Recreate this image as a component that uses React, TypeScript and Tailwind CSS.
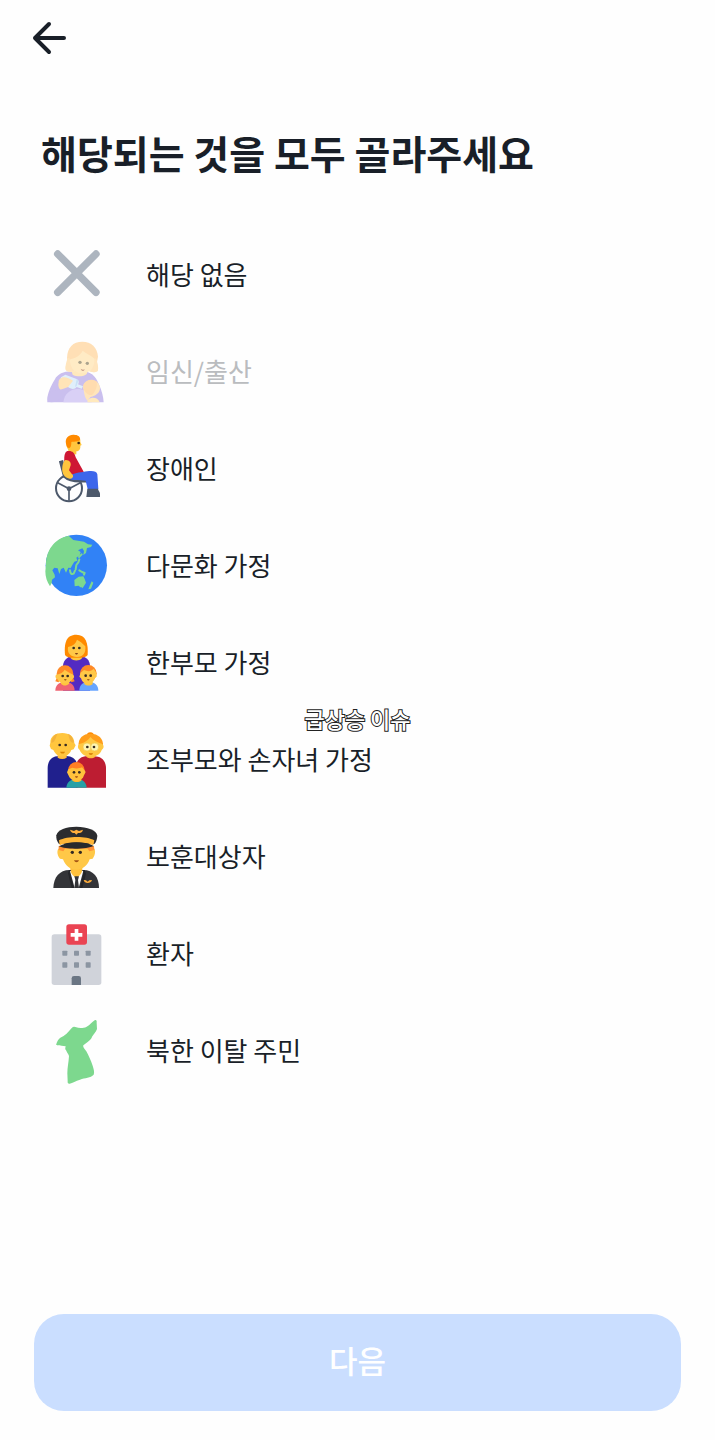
import { useState, type ReactNode } from "react";

type Option = {
  id: string;
  label: string;
  icon: ReactNode;
  disabled?: boolean;
};

function Icon({ viewBox, children }: { viewBox: string; children: ReactNode }) {
  return (
    <svg aria-hidden="true" className="size-20 shrink-0" fill="none" viewBox={viewBox}>
      {children}
    </svg>
  );
}

function NoneIcon() {
  return (
    <Icon viewBox="0 0 240 240">
      <path d="M65 57 180 172M180 57 65 172" stroke="#adb5bf" strokeLinecap="round" strokeWidth="22" />
    </Icon>
  );
}

function BabyIcon() {
  return (
    <Icon viewBox="0 6 240 240">
      <path d="M34 217c-2-22 8-45 22-68 9-17 27-25 49-25h30c30 0 44 14 53 38 9 18 14 37 15 55H34z" fill="#cabfee" />
      <path d="M105 118h52l-5 14c-9 9-31 9-42 2z" fill="#ffe9bd" />
      <path d="M93 84c1-32 18-49 46-49 27 0 45 17 47 45l-4 22-85-2z" fill="#ffdfb5" />
      <path d="M90 121c-3-8 1-23 7-32 20-3 36-13 43-27 10 8 26 14 40 28 4 12 8 24 5 33-8 6-18 4-26 1-8 8-31 8-41-1-10 5-22 4-28-2z" fill="#ffebc5" />
      <path d="M90 121c-4-8 1-25 5-38l6 2c0 15 5 29 14 38-9 4-19 3-25-2zM185 123c4-9-1-26-5-38l-5 3c1 14-5 28-13 36 7 3 16 4 23-1z" fill="#ffe5bd" />
      <circle cx="132" cy="97" fill="#aaa28d" r="5" />
      <circle cx="154" cy="100" fill="#aaa28d" r="5" />
      <path d="M134 116c4 3 8 4 12 2-2 7-9 6-12-2z" fill="#c69a88" />
      <path d="M82 217c3-26 21-40 44-40 23 0 36 17 41 40z" fill="#d9d0f6" />
      <path d="m75 142 13-8 32 12c8 3 11 9 6 17l15 6-4 7-15-5c-5 6-11 7-19 4l-32-14z" fill="#e0effb" />
      <path d="m122 148 5 4-5 16-5 3z" fill="#c9e1f6" />
      <path d="M68 157c-1-9 9-17 17-15 8 0 16 5 26 10l-13 17c-2 8-9 14-19 13-9-2-14-13-11-25z" fill="#ffe4b7" />
      <path d="M62 181c14-1 28-8 35-10 3 10-7 20-17 29-10 10-23 17-35 17-16-1-11-24 1-33z" fill="#cabfee" />
      <path d="M143 181c-5-14 4-28 19-30 16-3 30 8 30 23 0 14-13 24-28 27-4 2-7 8-8 13-9-8-11-19-13-33z" fill="#ffe5bb" />
      <path d="M142 164c8-15 26-19 40-9 3 15-4 29-14 40-13 3-28-13-26-31z" fill="#ffdcaf" />
      <path d="M154 217c2-17 30-20 37 0z" fill="#ffe9bd" />
    </Icon>
  );
}

function WheelchairIcon() {
  return (
    <Icon viewBox="0 3 240 240">
      <path d="m75 98 12 46c10 10 35 14 55 13h40" stroke="#4d596b" strokeLinejoin="round" strokeWidth="13" />
      <circle cx="99" cy="181" r="39" stroke="#4d596b" strokeWidth="6" />
      <path d="M99 182V218M99 182 65 164M99 182l34-18" stroke="#4d596b" strokeWidth="5" />
      <circle cx="99" cy="182" fill="#4d596b" r="7" />
      <path d="M97 61h24v18H97z" fill="#ffc63e" />
      <path d="M93 40c0-12 10-18 21-18 14 0 21 10 19 20l4 9-4 2c1 14-6 17-14 17l-20-2c-8-9-9-18-6-28z" fill="#ffc63e" />
      <path d="M90 47c-4-18 10-29 27-26 11 0 17 8 15 15-10 7-20 4-26 6 0 10-1 18-8 18-4-1-7-6-8-13z" fill="#ff8a00" />
      <circle cx="128" cy="45" fill="#3b2a17" r="4" />
      <path d="M97 69c11-1 19 5 22 19l24 43c-4 9-30 13-48 6-9-8-14-52-7-62 2-4 5-6 9-6z" fill="#ce1734" />
      <path d="M103 146c4-9 20-12 38-14 22-4 41-5 43 7l3 44h-32l-6-25c-20-2-34 0-46-4z" fill="#3c66eb" />
      <path d="M154 182h32c0 6 6 9 6 15v10h-41z" fill="#4d596b" />
      <path d="M88 96c12-1 18 8 16 16l-5 15 9 12c7 4 2 15-7 13-12-1-20-11-22-22-1-13 1-28 9-34z" fill="#ffc63e" />
    </Icon>
  );
}

function GlobeIcon() {
  return (
    <Icon viewBox="0 0 240 240">
      <circle cx="121" cy="118" fill="#3182f6" r="92" />
      <path d="M30 116c0-42 24-78 68-87l14 13 32 5 12 8 13 1-4 7-12 3-3 15-8 6 2-12-5-8-13 6 8 5-3 10-10 7 3 9-9 3-6 10-5 9-7-1-7 15-7-15-8 4-5 15-5-17-10-2-6 8 7 13 1 8-9 7-1 10-5 10c-9-13-14-29-14-45z" fill="#7dd88e" />
      <path d="m130 100-3 9-6 8-2 13M137 85l-8 8M102 133c1 10 5 13 11 10l4-9M130 133l8 5 8 3-2 5" stroke="#7dd88e" strokeLinecap="round" strokeLinejoin="round" strokeWidth="6" />
      <path d="m115 162 13-10 14-1 4 8 4 11-8 13-9 1-5-5-12 2zM167 166l5 4-7 18-8 2 4-11zM136 182l6 1-3 4z" fill="#7dd88e" />
    </Icon>
  );
}

function SingleParentIcon() {
  return (
    <Icon viewBox="0 -3 240 240">
      <path d="M81 200V124c2-18 17-28 32-28h18c18 0 31 13 31 30v74z" fill="#532bc2" />
      <path d="M104 92h34v11c-8 9-26 9-34 0z" fill="#ffc63e" />
      <path d="M87 93c-3-35 3-61 34-61 29 0 36 25 34 61-4 6-12 8-20 8h-29c-8 0-15-2-19-8z" fill="#ff8a00" />
      <path d="M96 69c15-3 24-11 27-22 8 4 16 10 25 20 2 20-6 32-25 32-19 0-30-11-27-30z" fill="#ffc847" />
      <circle cx="113" cy="72" fill="#362b22" r="4" />
      <circle cx="130" cy="72" fill="#362b22" r="4" />
      <path d="M117 87h9c-2 6-7 6-9 0z" fill="#884413" />

      <path d="M58 200c0-16 11-26 29-26s29 9 29 26z" fill="#ef6473" />
      <path d="M75 173h24v6c-7 7-18 7-24 0z" fill="#ffc63e" />
      <circle cx="87" cy="149" fill="#ff8a27" r="25" />
      <path d="m63 160-5 12 10 3 3-9M110 160l6 12-10 3-4-9" fill="#ff8a27" />
      <path d="M60 152c14-2 22-8 26-15 6 5 16 10 26 15 4 5 3 11-3 13-3 8-12 13-23 13-10 0-19-5-22-13-6-2-7-8-4-13z" fill="#ffc847" />
      <circle cx="80" cy="156" fill="#362b22" r="4" />
      <circle cx="95" cy="156" fill="#362b22" r="4" />
      <path d="M84 166h8c-2 5-6 5-8 0z" fill="#884413" />

      <path d="M130 200c0-16 10-26 28-26s29 9 29 26z" fill="#67a5ff" />
      <path d="M145 173h25v7c-7 6-18 6-25 0z" fill="#ffc63e" />
      <circle cx="157" cy="148" fill="#ff8a27" r="25" />
      <path d="m134 146 10-8c13 6 22 4 29-4l8 12 1 12-5 4c-4 12-13 18-22 18s-17-6-20-17l-5-5z" fill="#ffc847" />
      <circle cx="149" cy="155" fill="#362b22" r="4" />
      <circle cx="164" cy="155" fill="#362b22" r="4" />
      <path d="M153 166h8c-2 5-6 5-8 0z" fill="#884413" />
    </Icon>
  );
}

function GrandparentsIcon() {
  return (
    <Icon viewBox="0 -6 240 240">
      <path d="M35 197v-58c0-24 13-37 34-37h21c22 0 35 13 35 37v58z" fill="#20208d" />
      <path d="M120 197v-58c0-24 12-36 34-36h20c22 0 36 13 36 36v58z" fill="#bd1d32" />
      <path d="M65 94h27v13c-8 5-19 5-27 0zM151 91h27v13c-8 6-19 6-27 0z" fill="#ffbd3d" />
      <path d="M43 62c0-20 16-29 36-29 21 0 36 11 36 30l4 7-6 12-7 2c-5 12-14 20-26 20s-22-7-28-20l-7-3-4-10z" fill="#ffc63e" />
      <path d="M46 59c2-12 8-21 18-24-3 9-6 18-11 25l-7 3zM113 59c-2-12-8-20-17-24 3 9 4 18 9 25l7 3z" fill="#f3b23c" />
      <circle cx="71" cy="69" fill="#362b22" r="4" />
      <circle cx="89" cy="69" fill="#362b22" r="4" />
      <path d="M72 89h15c-2 7-12 8-15 0z" fill="#da8500" />
      <circle cx="163" cy="42" fill="#ff8a00" r="11" />
      <path d="M128 73c-3-24 13-38 35-38 24 0 40 14 38 38z" fill="#ff9e1b" />
      <path d="M130 66c14-3 28-12 33-21 8 10 23 17 36 21 6 5 5 13-2 18-5 14-17 20-33 20s-28-7-33-20c-7-5-7-13-1-18z" fill="#ffc842" />
      <g fill="#fff5b2" stroke="#efc84e" strokeWidth="2">
        <circle cx="153" cy="75" r="12" />
        <circle cx="176" cy="75" r="12" />
      </g>
      <circle cx="154" cy="75" fill="#362b22" r="4" />
      <circle cx="174" cy="75" fill="#362b22" r="4" />
      <path d="M158 94h13c-2 6-11 6-13 0z" fill="#d27500" />
      <path d="M91 197c1-17 13-26 31-26 17 0 29 10 30 26z" fill="#27a0a6" />
      <path d="M109 170h27v6c-7 5-20 5-27 0z" fill="#ffb72d" />
      <circle cx="121" cy="145" fill="#ff7e24" r="25" />
      <path d="m97 142 12-5c11 4 23 2 29-1l7 8 4 6-5 10c-3 11-11 16-23 16s-20-6-24-17l-4-8z" fill="#ffc23c" />
      <circle cx="114" cy="151" fill="#362b22" r="4" />
      <circle cx="130" cy="151" fill="#362b22" r="4" />
      <path d="M117 163h9c-2 6-7 6-9 0z" fill="#9e4710" />
    </Icon>
  );
}

function VeteranIcon() {
  return (
    <Icon viewBox="0 -9 240 240">
      <path d="M52 204c1-32 18-54 49-54h40c32 0 48 22 48 54z" fill="#333438" />
      <path d="m101 149 20-8 22 8-15 55h-12z" fill="#fff" />
      <path d="M103 134h36v16c-2 13-13 22-18 23-8-3-17-12-18-23z" fill="#ffc13c" />
      <path d="m106 150-5 5 13 49h-7L96 160l3-10zM137 150l6 5-11 49h7l11-43-4-11z" fill="#242529" />
      <path d="M115 169h14l-3 11 3 24h-14l3-24z" fill="#333438" />
      <path d="M67 86c16-5 92-5 108 0 4 7 3 19-5 30l-9 2c-6 19-22 31-40 31-19 0-33-12-40-31l-9-2c-8-10-10-22-5-30z" fill="#ffc847" />
      <path d="M68 78h106l1 12-15 4-5-8H87l-5 8-14-4z" fill="#ff9237" />
      <path d="M61 46c3-17 30-26 60-26 33 0 61 11 63 27-1 12-4 20-9 25H69c-6-7-9-16-8-26z" fill="#2b2c2f" />
      <path d="M69 61c24-13 82-14 106 0l-3 15c-26-12-73-13-101 0z" fill="#ffb638" />
      <path d="M69 79c22-15 83-15 104-1-17 9-82 12-104 1z" fill="#28292d" />
      <path d="m102 29 12 4 7-4 8 4 12-4c-2 8-7 10-15 10l-5 5-5-5c-8 0-12-3-14-10zM143 180l7 1 5 4 5-4 8-1c-2 7-7 9-13 9s-10-2-12-9z" fill="#ffad3b" />
      <circle cx="109" cy="97" fill="#332a23" r="5" />
      <circle cx="133" cy="97" fill="#332a23" r="5" />
      <path d="M114 121h15c-3 8-12 8-15 0z" fill="#a35314" />
    </Icon>
  );
}

function HospitalIcon() {
  return (
    <Icon viewBox="0 -3 240 240">
      <rect fill="#d0d3da" height="152" rx="8" width="149" x="47" y="58" />
      <rect fill="#ea4453" height="61" rx="8" width="62" x="91" y="28" />
      <path d="M116 42h11v12h12v11h-12v12h-11V65h-12V54h12z" fill="#fff" />
      <g fill="#8b95a2">
        <rect height="15" rx="2" width="15" x="79" y="107" />
        <rect height="15" rx="2" width="15" x="114" y="107" />
        <rect height="15" rx="2" width="15" x="149" y="107" />
        <rect height="16" rx="2" width="15" x="79" y="142" />
        <rect height="16" rx="2" width="15" x="114" y="142" />
        <rect height="16" rx="2" width="15" x="149" y="142" />
      </g>
      <path d="M107 210v-20q0-7 7-7h14q7 0 7 7v20z" fill="#6b7684" />
    </Icon>
  );
}

function PeninsulaIcon() {
  return (
    <Icon viewBox="0 -3 240 240">
      <path
        d="M61 96c2-8 6-15 12-19 14-6 24-17 35-30q4-4 10-2c11 4 22 5 34-1 10-5 17-15 25-20 4-1 6 2 5 8l1 19c-3 9-9 14-14 22-3 9-9 13-15 18l-12 9c-2 7 5 11 9 18 7 13 13 26 19 43 3 10 6 19 3 27-9 10-26 9-41 15-13 4-22 9-31 12-4 1-7-2-6-7l-1-24c0-18 4-33 5-52-1-6-6-9-8-16-5-4-3-8-2-13-8-2-17 0-25-3-4-1-4-3-3-4z"
        fill="#7dd88e"
      />
    </Icon>
  );
}

const options: Option[] = [
  { id: "none", label: "해당 없음", icon: <NoneIcon /> },
  { id: "pregnancy", label: "임신/출산", icon: <BabyIcon />, disabled: true },
  { id: "disability", label: "장애인", icon: <WheelchairIcon /> },
  { id: "multicultural", label: "다문화 가정", icon: <GlobeIcon /> },
  { id: "single-parent", label: "한부모 가정", icon: <SingleParentIcon /> },
  { id: "grandparents", label: "조부모와 손자녀 가정", icon: <GrandparentsIcon /> },
  { id: "veteran", label: "보훈대상자", icon: <VeteranIcon /> },
  { id: "patient", label: "환자", icon: <HospitalIcon /> },
  { id: "defector", label: "북한 이탈 주민", icon: <PeninsulaIcon /> },
];

export default function App() {
  const [selected, setSelected] = useState<string[]>([]);

  const toggle = (id: string) => {
    setSelected((prev) => (prev.includes(id) ? prev.filter((item) => item !== id) : [...prev, id]));
  };

  return (
    <main className="relative flex min-h-screen flex-col bg-[#fefefe] font-['Noto_Sans_CJK_KR',sans-serif] text-[#191f28]">
      <header className="flex h-[74px] items-center px-7">
        <button aria-label="뒤로 가기" className="flex size-11 items-center justify-center" type="button">
          <svg aria-hidden="true" className="size-10" fill="none" viewBox="0 0 40 40">
            <path d="M19 7 5 21l14 14M5 21h29" stroke="#191f28" strokeLinecap="round" strokeLinejoin="round" strokeWidth="4" />
          </svg>
        </button>
      </header>

      <h1 className="mt-[50px] px-[41px] text-[39px] leading-14 font-bold">해당되는 것을 모두 골라주세요</h1>

      <ul className="mt-[46px] px-9">
        {options.map((option) => (
          <li key={option.id}>
            <label className="relative flex h-[97px] items-center gap-[30px]" htmlFor={option.id}>
              <input
                checked={selected.includes(option.id)}
                className="sr-only"
                disabled={option.disabled}
                id={option.id}
                onChange={() => toggle(option.id)}
                type="checkbox"
              />
              {option.icon}
              <span className={option.disabled ? "pb-0.5 text-[26px] text-[#babcbf]" : "pb-0.5 text-[26px]"}>{option.label}</span>
            </label>
          </li>
        ))}
      </ul>

      <p className="pointer-events-none absolute inset-x-0 top-1/2 -translate-y-1/2 pb-1 text-center text-[22px] leading-6 font-medium text-white [-webkit-text-stroke:2px_#222] [paint-order:stroke_fill]">
        급상승 이슈
      </p>

      <footer className="mt-auto px-[34px] pt-8 pb-[29px]">
        <button className="h-[97px] w-full rounded-[30px] bg-[#cadeff] pb-1 text-[31px] font-medium text-white" type="button">
          다음
        </button>
      </footer>
    </main>
  );
}
